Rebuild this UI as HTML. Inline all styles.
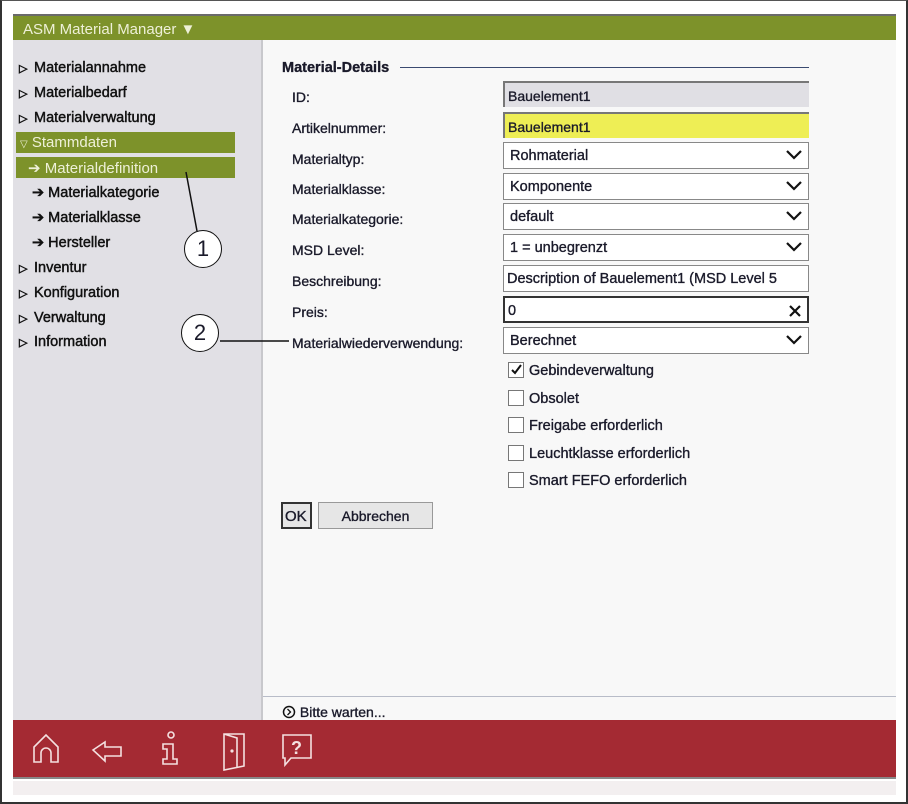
<!DOCTYPE html>
<html><head><meta charset="utf-8"><style>
*{box-sizing:border-box;margin:0;padding:0}
body{width:908px;height:804px;background:#fff;font-family:"Liberation Sans",Arial,sans-serif;font-size:14px;color:#1a1a2a;position:relative;overflow:hidden;-webkit-text-stroke:0.35px}
.frame{position:absolute;left:0;top:0;width:908px;height:804px;border:2px solid #333;border-top:1px solid #555}
.a{position:absolute}
.hdr{left:13px;top:14px;width:883px;height:26px;background:#7d922a;color:#eef0d8;font-size:15px;padding:5px 0 0 10px;border-top:2px solid #6a6a6a;-webkit-text-stroke:0}
.side{left:13px;top:40px;width:250px;height:680px;background:#e1e0e5;border-right:2px solid #c8c8cc}
.main{left:263px;top:40px;width:633px;height:680px;background:#f8f8f8}
.nav{position:absolute;left:19px;font-size:14.5px;color:#111;-webkit-text-stroke:0.45px}
.tri{font-size:11px;display:inline-block;width:15px;-webkit-text-stroke:0.6px}
.sel{position:absolute;left:16px;width:219px;height:21px;background:#7d922a;color:#eef0d8;-webkit-text-stroke:0}
.lbl{position:absolute;left:292px;font-size:14px}
.f{position:absolute;left:503px;width:306px;height:27px;border:1px solid #888;background:#fff;font-size:14.5px;padding:5px 0 0 6px}
.chev{position:absolute;right:6px;top:7px}
.cb{position:absolute;left:508px;width:16px;height:16px;border:1px solid #777;background:#fff}
.ct{position:absolute;left:529px;font-size:14.5px}
.circ{position:absolute;width:38px;height:38px;border:1.5px solid #111;border-radius:50%;background:#fff;font-size:22px;text-align:center;line-height:35px;-webkit-text-stroke:0}
</style></head><body>
<div class="frame"></div>
<div class="a hdr">ASM Material Manager ▼</div>
<div class="a side"></div>
<div class="a main"></div>
<div class="nav" style="top:60px"><span class="tri">▷</span>Materialannahme</div>
<div class="nav" style="top:85px"><span class="tri">▷</span>Materialbedarf</div>
<div class="nav" style="top:110px"><span class="tri">▷</span>Materialverwaltung</div>
<div class="sel" style="top:132px;padding:2px 0 0 4px;font-size:15px"><span style="font-size:10px">▽</span> Stammdaten</div>
<div class="sel" style="top:157px;padding:2px 0 0 12px;font-size:15px">➔ Materialdefinition</div>
<div class="nav" style="top:185px;left:32px">➔ Materialkategorie</div>
<div class="nav" style="top:210px;left:32px">➔ Materialklasse</div>
<div class="nav" style="top:235px;left:32px">➔ Hersteller</div>
<div class="nav" style="top:260px"><span class="tri">▷</span>Inventur</div>
<div class="nav" style="top:285px"><span class="tri">▷</span>Konfiguration</div>
<div class="nav" style="top:310px"><span class="tri">▷</span>Verwaltung</div>
<div class="nav" style="top:334px"><span class="tri">▷</span>Information</div>

<div class="a" style="left:282px;top:60px;font-weight:bold;font-size:14.5px">Material-Details</div>
<div class="a" style="left:400px;top:67px;width:409px;height:1px;background:#3a4a70"></div>

<div class="lbl" style="top:89px">ID:</div>
<div class="lbl" style="top:120px">Artikelnummer:</div>
<div class="lbl" style="top:151px">Materialtyp:</div>
<div class="lbl" style="top:181px">Materialklasse:</div>
<div class="lbl" style="top:211px">Materialkategorie:</div>
<div class="lbl" style="top:242px">MSD Level:</div>
<div class="lbl" style="top:273px">Beschreibung:</div>
<div class="lbl" style="top:304px">Preis:</div>
<div class="lbl" style="top:335px">Materialwiederverwendung:</div>

<div class="f" style="top:81px;height:26px;background:#e0dfe4;border:none;border-top:2px solid #777;border-left:2px solid #777;font-size:14px;padding-left:3px">Bauelement1</div>
<div class="f" style="top:112px;height:26px;background:#eeee55;border:none;border-top:2px solid #777;border-left:2px solid #777;font-size:14px;padding-left:3px">Bauelement1</div>
<div class="f" style="top:142px">Rohmaterial<svg class="chev" width="16" height="10"><path d="M1 1l7 7 7-7" fill="none" stroke="#111" stroke-width="2.2"/></svg></div>
<div class="f" style="top:173px">Komponente<svg class="chev" width="16" height="10"><path d="M1 1l7 7 7-7" fill="none" stroke="#111" stroke-width="2.2"/></svg></div>
<div class="f" style="top:203px">default<svg class="chev" width="16" height="10"><path d="M1 1l7 7 7-7" fill="none" stroke="#111" stroke-width="2.2"/></svg></div>
<div class="f" style="top:234px">1 = unbegrenzt<svg class="chev" width="16" height="10"><path d="M1 1l7 7 7-7" fill="none" stroke="#111" stroke-width="2.2"/></svg></div>
<div class="f" style="top:265px;padding-left:3px;white-space:nowrap;overflow:hidden">Description of Bauelement1 (MSD Level 5</div>
<div class="f" style="top:296px;border:2px solid #333;padding-left:3px">0<svg style="position:absolute;right:6px;top:7px" width="12" height="12"><path d="M1 1l10 10M11 1L1 11" stroke="#111" stroke-width="2.2"/></svg></div>
<div class="f" style="top:327px">Berechnet<svg class="chev" width="16" height="10"><path d="M1 1l7 7 7-7" fill="none" stroke="#111" stroke-width="2.2"/></svg></div>

<div class="cb" style="top:362px"><svg width="14" height="14"><path d="M3 7l3 3 6-8" fill="none" stroke="#111" stroke-width="2"/></svg></div>
<div class="ct" style="top:363px">Gebindeverwaltung</div>
<div class="cb" style="top:390px"></div><div class="ct" style="top:391px">Obsolet</div>
<div class="cb" style="top:417px"></div><div class="ct" style="top:418px">Freigabe erforderlich</div>
<div class="cb" style="top:445px"></div><div class="ct" style="top:446px">Leuchtklasse erforderlich</div>
<div class="cb" style="top:472px"></div><div class="ct" style="top:473px">Smart FEFO erforderlich</div>

<div class="a" style="left:281px;top:502px;width:31px;height:27px;border:2px solid #333;background:#e6e6e6;font-size:15px;padding:4px 0 0 2px">OK</div>
<div class="a" style="left:318px;top:502px;width:115px;height:27px;border:1px solid #999;background:#e6e6e6;text-align:center;padding-top:5px">Abbrechen</div>

<div class="a" style="left:263px;top:696px;width:633px;height:1px;background:#b8bcc8"></div>
<div class="a" style="left:282px;top:704px;font-size:14px"><svg width="14" height="14" style="vertical-align:-2px"><circle cx="7" cy="7" r="5.5" fill="none" stroke="#111" stroke-width="1.5"/><path d="M5.5 4l3 3-3 3" fill="none" stroke="#111" stroke-width="1.3"/></svg> Bitte warten...</div>

<div class="a" style="left:13px;top:720px;width:883px;height:59px;background:#a42a33;border-bottom:2px solid #888"></div>
<div class="a" style="left:13px;top:781px;width:883px;height:14px;background:#f3eff0"></div>
<svg class="a" style="left:13px;top:720px" width="400" height="59" fill="none" stroke="#f4e0e0" stroke-width="1.6">
<path d="M21 42V27l12-12 12 12v15h-7v-9a5 5 0 0 0-10 0v9z"/>
<path d="M80 30l12-8v5h16v9H92v5z"/>
<circle cx="158" cy="15" r="3"/><path d="M150 24h10v15h4v5h-14v-5h4V29h-4z"/>
<path d="M211 14h20v32l-20 4zM211 14l13 4v30"/><circle cx="219" cy="31" r="0.8" fill="#f4e0e0"/>
<path d="M270 15h28v23h-20l-6 7v-7h-2z"/>
<text x="278" y="34" fill="#f4e0e0" stroke="none" font-family="Liberation Sans" font-weight="bold" font-size="18">?</text>
</svg>

<svg class="a" style="left:0;top:0" width="400" height="400"><path d="M186 172L197 231M220 341H289" stroke="#111" stroke-width="1.5"/></svg>
<div class="circ" style="left:184px;top:230px">1</div>
<div class="circ" style="left:181px;top:314px">2</div>
</body></html>
